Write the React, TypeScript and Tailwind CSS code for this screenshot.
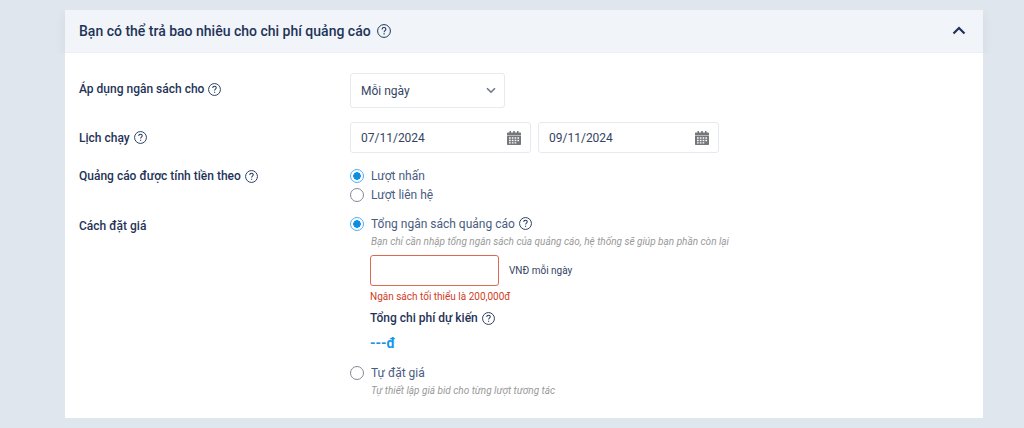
import { useId, useState } from 'react';
import type { ReactNode } from 'react';

function HelpIcon({ size = 13 }: { size?: number }) {
  return (
    <svg width={size} height={size} viewBox="0 0 14 14" fill="none" stroke="currentColor" aria-hidden="true" className="shrink-0">
      <circle cx="7" cy="7" r="6.4" strokeWidth="1" />
      <path d="M5.1 5.4c0-1.1.8-1.9 1.9-1.9s1.9.8 1.9 1.7c0 1.4-1.8 1.5-1.8 3" strokeWidth="1.1" />
      <path d="M7.1 9.3v1.2" strokeWidth="1.2" />
    </svg>
  );
}

function CalendarIcon() {
  return (
    <svg width="14" height="14" viewBox="0 0 14 14" aria-hidden="true">
      <path
        fill="#74767b"
        fillRule="evenodd"
        d="M2.5 0h1.5v1.5h2.2V0h1.6v1.5H10V0h1.5v1.5H13c.6 0 1 .4 1 1V4H0V2.5c0-.6.4-1 1-1h1.5zM0 4.6h14V13c0 .6-.4 1-1 1H1c-.6 0-1-.4-1-1zm2 1.6v1.5h1.7V6.2zm2.8 0v1.5h1.7V6.2zm2.8 0v1.5h1.7V6.2zm2.8 0v1.5h1.7V6.2zM2 8.8v1.4h1.7V8.8zm2.8 0v1.4h1.7V8.8zm2.8 0v1.4h1.7V8.8zm2.8 0v1.4h1.7V8.8zM2 11.2v1.2h1.7v-1.2zm2.8 0v1.2h1.7v-1.2zm2.8 0v1.2h1.7v-1.2z"
      />
    </svg>
  );
}

type RowProps = { label: string; help?: boolean; className: string; labelClass?: string; children: ReactNode };

function Row({ label, help, className, labelClass = 'leading-5', children }: RowProps) {
  const id = useId();
  return (
    <div role="group" aria-labelledby={id} className={`flex ${className}`}>
      <div className={`flex w-[271px] shrink-0 items-center gap-1 text-xs font-medium text-[#1f3358] ${labelClass}`}>
        <span id={id}>{label}</span>
        {help && <HelpIcon />}
      </div>
      <div className="min-w-0 flex-1">{children}</div>
    </div>
  );
}

type RadioProps = { name: string; label: string; checked: boolean; help?: boolean; onChange: () => void };

function Radio({ name, label, checked, help, onChange }: RadioProps) {
  return (
    <label className="flex h-[19px] w-fit items-center text-xs text-[#4a5c80]">
      <input
        type="radio"
        name={name}
        checked={checked}
        onChange={onChange}
        className="mr-[7px] size-3.5 shrink-0 appearance-none rounded-full border border-[#85899a] checked:border-[#4db1f0] checked:bg-[radial-gradient(circle,#0b8fe6_3.5px,transparent_4px)]"
      />
      {label}
      {help && (
        <span className="ml-1 text-[#1f3358]">
          <HelpIcon />
        </span>
      )}
    </label>
  );
}

function DateField({ label, initial }: { label: string; initial: string }) {
  const [value, setValue] = useState(initial);
  return (
    <div className="flex h-[31px] w-[181px] items-center rounded-[3px] border border-[#e6e9f0] pr-[9px] pl-2.5">
      <input
        type="text"
        aria-label={label}
        value={value}
        onChange={(e) => setValue(e.target.value)}
        className="min-w-0 flex-1 text-xs text-[#344563] outline-none"
      />
      <button type="button" aria-label={`Chọn ${label}`}>
        <CalendarIcon />
      </button>
    </div>
  );
}

export default function App() {
  const [open, setOpen] = useState(true);
  const [period, setPeriod] = useState('day');
  const [charge, setCharge] = useState('click');
  const [bid, setBid] = useState('total');
  const [budget, setBudget] = useState('');

  return (
    <main className="min-h-screen bg-[#dfe6ed] pt-2.5 pr-[41px] pb-2.5 pl-[65px] font-['Roboto','Liberation_Sans',sans-serif]">
      <section className="bg-white">
        <header className="flex h-[43px] items-center justify-between border-b border-[#eceff4] bg-[#f1f5fa] pr-[17px] pl-3.5 text-[#1f3358] shadow-[0_4px_10px_rgba(60,80,110,0.08)] [clip-path:inset(0_-10px)]">
          <h2 className="flex items-center gap-1.5 text-sm font-medium">
            Bạn có thể trả bao nhiêu cho chi phí quảng cáo
            <HelpIcon size={14} />
          </h2>
          <button type="button" aria-label="Thu gọn" aria-expanded={open} onClick={() => setOpen(!open)}>
            <svg width="14" height="10" viewBox="0 0 14 10" fill="none" stroke="currentColor" strokeWidth="2.2">
              <path d={open ? 'M1.5 7.5 7 2l5.5 5.5' : 'M1.5 2.5 7 8l5.5-5.5'} />
            </svg>
          </button>
        </header>

        {open && (
          <div className="px-3.5 pt-5 pb-[18px]">
            <Row label="Áp dụng ngân sách cho" help className="items-start" labelClass="leading-8">
              <div className="grid w-[155px] items-center">
                <select
                  aria-label="Áp dụng ngân sách cho"
                  value={period}
                  onChange={(e) => setPeriod(e.target.value)}
                  className="col-start-1 row-start-1 h-[35px] appearance-none rounded-[3px] border border-[#e6e9f0] pl-2.5 text-xs text-[#344563]"
                >
                  <option value="day">Mỗi ngày</option>
                  <option value="all">Toàn chiến dịch</option>
                </select>
                <svg
                  width="10"
                  height="7"
                  viewBox="0 0 10 7"
                  fill="none"
                  stroke="#6f7787"
                  strokeWidth="1.6"
                  className="pointer-events-none col-start-1 row-start-1 mr-[9px] justify-self-end"
                >
                  <path d="M1 1.2 5 5.2l4-4" />
                </svg>
              </div>
            </Row>

            <Row label="Lịch chạy" help className="mt-3.5 items-center">
              <div className="flex flex-wrap gap-[7px]">
                <DateField label="ngày bắt đầu" initial="07/11/2024" />
                <DateField label="ngày kết thúc" initial="09/11/2024" />
              </div>
            </Row>

            <Row label="Quảng cáo được tính tiền theo" help className="mt-[13px] items-start">
              <Radio name="charge" label="Lượt nhấn" checked={charge === 'click'} onChange={() => setCharge('click')} />
              <Radio name="charge" label="Lượt liên hệ" checked={charge === 'contact'} onChange={() => setCharge('contact')} />
            </Row>

            <Row label="Cách đặt giá" className="mt-2.5 items-start" labelClass="leading-6">
              <Radio name="bid" label="Tổng ngân sách quảng cáo" help checked={bid === 'total'} onChange={() => setBid('total')} />
              <div className="pl-5">
                <p className="pt-px pl-px text-[10px] leading-4 text-[#999999] italic">
                  Bạn chỉ cần nhập tổng ngân sách của quảng cáo, hệ thống sẽ giúp bạn phần còn lại
                </p>
                <div className="mt-[5px] flex items-center gap-2.5">
                  <input
                    type="text"
                    aria-label="Tổng ngân sách quảng cáo"
                    aria-invalid="true"
                    value={budget}
                    onChange={(e) => setBudget(e.target.value)}
                    className="h-[31px] w-[129px] rounded-[3px] border border-[#dc6a52] px-2.5 text-xs text-[#344563] outline-none"
                  />
                  <span className="text-[10px] leading-4 text-[#344563]">VNĐ mỗi ngày</span>
                </div>
                <p className="mt-[3px] text-[10px] leading-4 text-[#d0401f]">Ngân sách tối thiểu là 200,000đ</p>
                <p className="mt-[3px] flex items-center gap-1 text-xs leading-5 font-medium text-[#1f3358]">
                  Tổng chi phí dự kiến
                  <HelpIcon />
                </p>
                <p className="mt-[5px] text-sm leading-5 font-bold text-[#1596ea]">---đ</p>
              </div>
              <div className="mt-2.5">
                <Radio name="bid" label="Tự đặt giá" checked={bid === 'manual'} onChange={() => setBid('manual')} />
                <p className="pt-px pb-px pl-[21px] text-[10px] leading-4 text-[#999999] italic">
                  Tự thiết lập giá bid cho từng lượt tương tác
                </p>
              </div>
            </Row>
          </div>
        )}
      </section>
    </main>
  );
}
